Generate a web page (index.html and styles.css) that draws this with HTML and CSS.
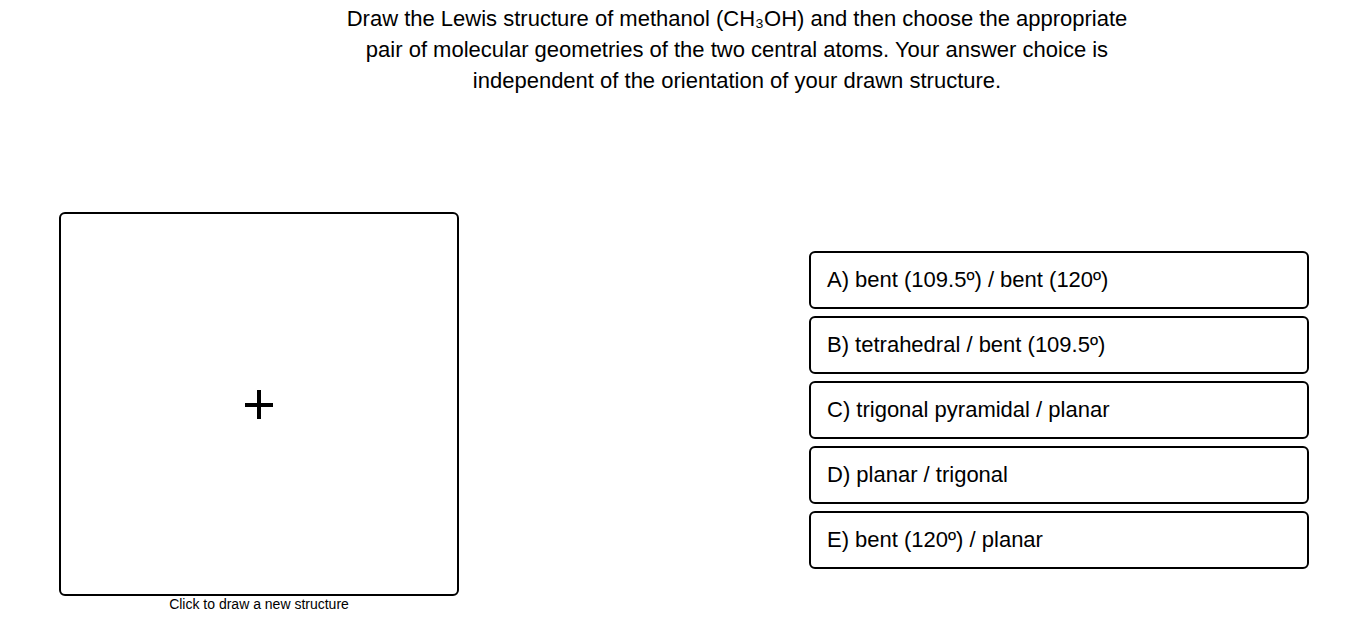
FILE: index.html
```html
<!DOCTYPE html>
<html lang="en">
<head>
    <meta charset="UTF-8">
    <meta name="viewport" content="width=device-width, initial-scale=1.0">
    <title>Lewis Structure - Methanol</title>
    <link rel="stylesheet" href="styles.css">
</head>
<body>
    <div class="question">
        Draw the Lewis structure of methanol (CH₃OH) and then choose the appropriate
        pair of molecular geometries of the two central atoms. Your answer choice is
        independent of the orientation of your drawn structure.
    </div>

    <div class="workspace">
        <div class="sketch-column">
            <div class="sketch-box">
                <svg class="plus-icon" width="28" height="29" viewBox="0 0 28 29">
                    <rect x="12" y="0" width="4" height="29" fill="#000"/>
                    <rect x="0" y="13" width="28" height="4" fill="#000"/>
                </svg>
            </div>
            <div class="sketch-caption">Click to draw a new structure</div>
        </div>

        <div class="choices">
            <div class="choice">A) bent (109.5º) / bent (120º)</div>
            <div class="choice">B) tetrahedral / bent (109.5º)</div>
            <div class="choice">C) trigonal pyramidal / planar</div>
            <div class="choice">D) planar / trigonal</div>
            <div class="choice">E) bent (120º) / planar</div>
        </div>
    </div>
</body>
</html>
```

FILE: styles.css
```css
* {
    margin: 0;
    padding: 0;
    box-sizing: border-box;
}

body {
    font-family: 'Liberation Sans', Arial, sans-serif;
    color: #000;
    background: #fff;
    width: 1368px;
    height: 626px;
    overflow: hidden;
}

.question {
    width: 800px;
    margin-left: 337px;
    padding-top: 3px;
    font-size: 22px;
    line-height: 31px;
    text-align: center;
}

.workspace {
    display: flex;
    align-items: flex-start;
    margin-top: 116px;
    padding-left: 59px;
}

.sketch-column {
    display: flex;
    flex-direction: column;
    align-items: center;
    width: 400px;
}

.sketch-box {
    width: 400px;
    height: 384px;
    border: 2px solid #000;
    border-radius: 6px;
    display: flex;
    align-items: center;
    justify-content: center;
    cursor: pointer;
}

.sketch-caption {
    font-size: 14px;
    line-height: 16px;
}

.choices {
    display: flex;
    flex-direction: column;
    gap: 7px;
    width: 500px;
    margin-left: 350px;
    margin-top: 39px;
}

.choice {
    height: 58px;
    border: 2px solid #000;
    border-radius: 6px;
    padding-left: 16px;
    display: flex;
    align-items: center;
    font-size: 22px;
    cursor: pointer;
}
```
